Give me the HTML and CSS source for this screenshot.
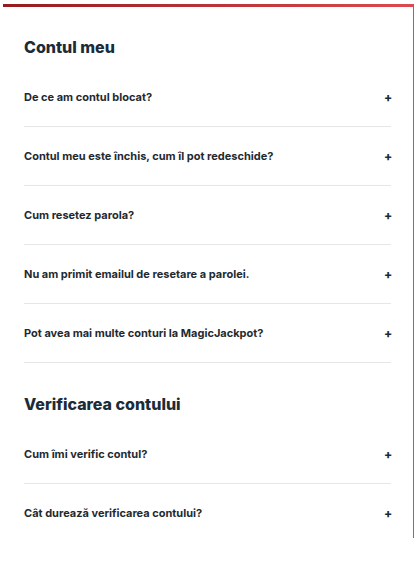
FILE: index.html
```html
<!DOCTYPE html>
<html>
<head>
    <title>Contul meu - Întrebări frecvente</title>
    <link rel="stylesheet" href="styles.css">
</head>
<body>
    <div class="faq-card">
        <div class="faq-section">
            <h2>Contul meu</h2>
            <div class="faq-item"><span>De ce am contul blocat?</span><span class="plus">+</span></div>
            <div class="faq-item"><span>Contul meu este închis, cum îl pot redeschide?</span><span class="plus">+</span></div>
            <div class="faq-item"><span>Cum resetez parola?</span><span class="plus">+</span></div>
            <div class="faq-item"><span>Nu am primit emailul de resetare a parolei.</span><span class="plus">+</span></div>
            <div class="faq-item"><span>Pot avea mai multe conturi la MagicJackpot?</span><span class="plus">+</span></div>
        </div>

        <div class="faq-section">
            <h2>Verificarea contului</h2>
            <div class="faq-item"><span>Cum îmi verific contul?</span><span class="plus">+</span></div>
            <div class="faq-item"><span>Cât durează verificarea contului?</span><span class="plus">+</span></div>
        </div>
    </div>
</body>
</html>
```

FILE: styles.css
```css
body { margin: 0; padding: 4px 3px 0 3px; background: #fff; font-family: Inter, "Liberation Sans", sans-serif; }
.faq-card { border-top: 3px solid #b3262b; border-image: linear-gradient(to right, #951b1e, #dc4a50) 1; border-right: 1px solid #ececec; padding: 30px 22px 0 21px; height: 534px; box-sizing: border-box; }
.faq-section h2 { margin: 0 0 11px 0; font-size: 16px; line-height: 20px; font-weight: 800; color: #1b2c38; }
.faq-section + .faq-section { margin-top: 31px; }
.faq-item { display: flex; justify-content: space-between; align-items: center; height: 58px; border-bottom: 1px solid #e6e6e6; font-size: 11px; font-weight: 700; color: #1f2a30; }
.faq-card .faq-section:last-child .faq-item:last-child { border-bottom: none; }
.plus { font-size: 12px; font-weight: 800; width: 8px; margin-right: -1px; text-align: center; color: #1b2c38; }
```
